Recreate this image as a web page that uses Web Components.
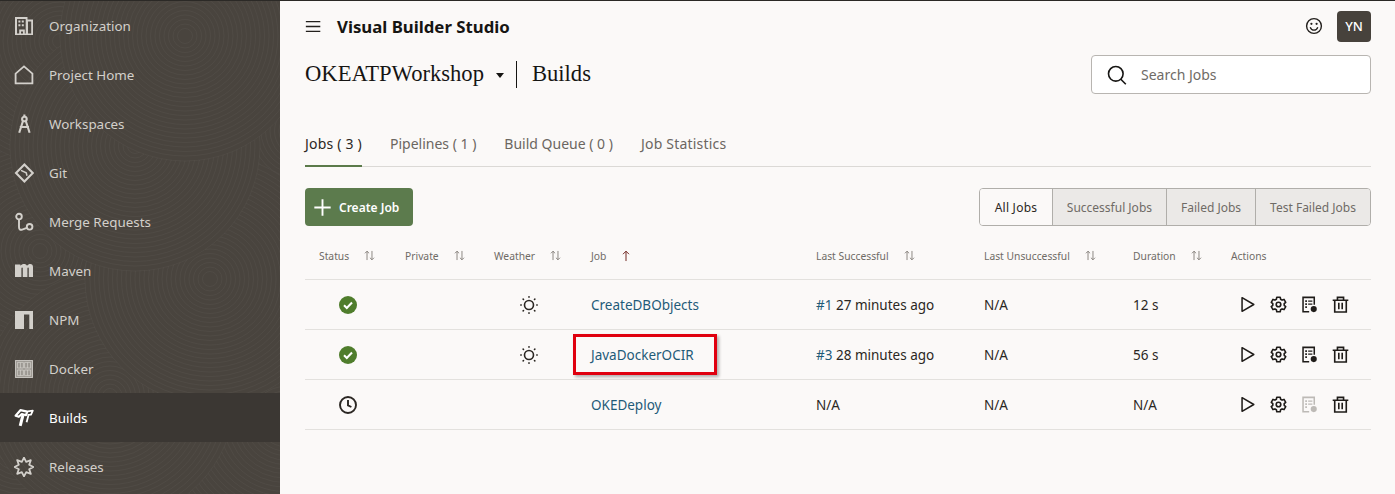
<!DOCTYPE html>
<html lang="en">
<head>
<meta charset="utf-8">
<title>Visual Builder Studio</title>
<style>
  html, body { margin: 0; height: 100%; overflow: hidden; background: #fbf9f8; }
  body { font-family: "Noto Sans", "Open Sans", sans-serif; color: #23201d; }
</style>
</head>
<body>
<vb-app></vb-app>
<script>
// Icon paths, all drawn on a 20x20 box
const ICONS = {
  organization: `<path fill="currentColor" fill-rule="evenodd" d="M1 1h12.5v2.5H19V19H1zM3 3v14.4h2.2v-3.8h5.6v3.8h.9V3zM14 5.6v11.8h3.2V5.6zM7 15.4v2h2v-2zM4.4 4.6h2v2h-2zM7.8 4.6h2v2h-2zM4.4 8.2h2v2h-2zM7.8 8.2h2v2h-2z"/>`,
  home: `<path fill="none" stroke="currentColor" stroke-width="1.8" d="M1.6 8.6 10 1.4l8.4 7.2V18.4H1.6z"/>`,
  workspaces: `<g fill="none" stroke="currentColor" stroke-width="2.1"><circle cx="10.4" cy="5" r="2.3"/><path d="M9 7 5.2 18.8M11.8 7l3.8 11.8M5.8 13h9.2M10.4 .4v2.4"/></g>`,
  git: `<g fill="none" stroke="currentColor"><path stroke-width="2.1" d="M10.4 1.6 18.8 10l-8.4 8.4L2 10z"/><path stroke-width="1.5" d="m7 7.4 5.2 2.4.8 3"/></g>`,
  merge: `<g fill="none" stroke="currentColor" stroke-width="1.9"><circle cx="5" cy="4.6" r="2.8"/><circle cx="15.6" cy="14.8" r="2.8"/><path d="M5 7.4V15c0 2.4 1.2 3.2 3.2 2.6l4.6-1.8"/></g>`,
  maven: `<path fill="currentColor" d="M1 3.4h5.4v1.4C7.4 3.6 8.6 3 10 3s2.4.6 3 1.8C14 3.6 15 3 16.2 3 18 3 19 4.2 19 6v10h-4.2V7.2c0-.5-.3-.7-.7-.7s-.7.2-.7.7V16h-4.6V7.2c0-.5-.3-.7-.7-.7s-.7.2-.7.7V16H1z"/>`,
  npm: `<path fill="currentColor" d="M1 1h18v18h-3.7V4.6H10V19H1z"/>`,
  docker: `<path fill="currentColor" opacity=".6" d="M1 1h18v18H1z"/><path fill="none" stroke="#d3d0cb" stroke-opacity=".75" stroke-width="1" d="M1.5 1.5h17v17h-17zM3.4 3.4h6v5.6h-6zM10.6 3.4h6v5.6h-6zM3.4 11h6v5.6h-6zM10.6 11h6v5.6h-6zM6.4 3.4V9M13.6 3.4V9M6.4 11v5.6M13.6 11v5.6"/>`,
  builds: `<g fill="none" stroke="currentColor" stroke-linejoin="round"><path stroke-width="2.2" d="M1.6 7.8 6.4 2.2l6.8 1.4-1.2 3.6-4.2-1.2-3 2.8z"/><path stroke-width="3" d="M9 7 6.2 17.8"/><path stroke-width="1.8" d="m13.8 3.4 5-.8-1.8 4-3.4.2M14.4 7.4l-1.8 6.8"/></g>`,
  releases: `<path fill="none" stroke="currentColor" stroke-width="1.8" stroke-linejoin="round" d="M10 .6l2.2 4.2 4.6-1.6-1.6 4.6 4.2 2.2-4.2 2.2 1.6 4.6-4.6-1.6L10 19.4l-2.2-4.2-4.6 1.6 1.6-4.6L.6 10l4.2-2.2-1.6-4.6 4.6 1.6z"/>`,
  menu: `<path fill="none" stroke="currentColor" stroke-width="1.5" d="M1 4.2h17M1 10h17M1 15.8h17"/>`,
  smile: `<g fill="none" stroke="currentColor"><circle cx="10" cy="10" r="7.4" stroke-width="1.4"/><path stroke-width="1.3" d="M6.2 11.2c.8 2 2.2 3 3.8 3s3-1 3.8-3"/></g><circle cx="7.4" cy="7.8" r="1.1" fill="currentColor"/><circle cx="12.6" cy="7.8" r="1.1" fill="currentColor"/>`,
  search: `<g fill="none" stroke="currentColor" stroke-width="1.6"><circle cx="8.8" cy="8.8" r="7.3"/><path d="m13.8 14.2 5 5"/></g>`,
  plus: `<path fill="none" stroke="currentColor" stroke-width="2" d="M10 1.4v17.2M1.4 10h17.2"/>`,
  success: `<circle cx="10" cy="10" r="9" fill="#4f7d2c"/><path fill="none" stroke="#fff" stroke-width="2.1" d="m6 10.2 2.8 2.7L14 7.6"/>`,
  clock: `<g fill="none" stroke="currentColor" stroke-width="1.9"><circle cx="10" cy="10" r="8"/><path d="M10 5v5.4l3.4 1.6"/></g>`,
  sun: `<circle cx="10" cy="10" r="5" fill="none" stroke="currentColor" stroke-width="1.8"/><path fill="none" stroke="currentColor" stroke-width="1.7" stroke-linecap="round" d="M10 .8v.6M10 18.6v.6M.8 10h.6M18.6 10h.6M3.5 3.5l.4.4M16.1 16.1l.4.4M3.5 16.5l.4-.4M16.1 3.9l.4-.4"/>`,
  play: `<path fill="none" stroke="currentColor" stroke-width="1.8" stroke-linejoin="round" d="M3.6 2v16L17.4 10z"/>`,
  gear: `<g fill="none" stroke="currentColor" stroke-width="1.9" stroke-linejoin="round"><path d="M8 1.4h4l.5 2.4 1.7 1 2.3-.8 2 3.4-1.8 1.6v2l1.8 1.6-2 3.4-2.3-.8-1.7 1-.5 2.4H8l-.5-2.4-1.7-1-2.3.8-2-3.4L3.3 11V9L1.5 7.4l2-3.4 2.3.8 1.7-1z"/><circle cx="10" cy="10" r="2.7"/></g>`,
  log: `<g fill="none" stroke="currentColor" stroke-width="1.8"><path d="M9.6 18.4H2.4V1.6h13.2v8.8"/></g><path fill="currentColor" d="M5 5h2v2H5zM8.4 5.2h5v1.6h-5zM5 8.6h2v2H5zM8.4 8.8h5v1.6h-5zM5 12.2h2v2H5z"/><circle cx="15" cy="15.4" r="3.6" fill="currentColor"/>`,
  trash: `<g fill="none" stroke="currentColor" stroke-width="1.9"><path d="M.8 5h18.4M6.4 5V1.6h7.2V5M3.2 5v13.8h13.6V5M8 8v7.6M12 8v7.6"/></g>`,
  sortBoth: `<path fill="none" stroke="currentColor" stroke-width="1.3" d="M6.2 17V3.4M3 6.6l3.2-3.2 3.2 3.2M13.8 3v13.6M10.6 13.4l3.2 3.2 3.2-3.2"/>`,
  sortUp: `<path fill="none" stroke="currentColor" stroke-width="1.6" d="M10 18.4V2M5 7l5-5 5 5"/>`
};

class VbIcon extends HTMLElement {
  connectedCallback() {
    const size = this.getAttribute('size') || 20;
    const name = this.getAttribute('name');
    this.attachShadow({ mode: 'open' });
    this.shadowRoot.innerHTML = `
      <style>
        :host { display: inline-flex; flex: none; width: ${size}px; height: ${size}px; }
        svg { display: block; width: 100%; height: 100%; }
      </style>
      <svg viewBox="0 0 20 20" aria-hidden="true">${ICONS[name] || ''}</svg>`;
  }
}
customElements.define('vb-icon', VbIcon);

class VbNavItem extends HTMLElement {
  connectedCallback() {
    this.attachShadow({ mode: 'open' });
    this.shadowRoot.innerHTML = `
      <style>
        :host {
          display: flex;
          align-items: center;
          gap: 15px;
          height: 49px;
          padding-left: 14px;
          font-size: 13.4px;
          color: #d3d0cb;
        }
        :host([active]) { background: #3b3733; color: #fff; }
      </style>
      <vb-icon name="${this.getAttribute('icon')}"></vb-icon>
      <span><slot></slot></span>`;
  }
}
customElements.define('vb-nav-item', VbNavItem);

class VbSidebar extends HTMLElement {
  connectedCallback() {
    // contour lines of the wood-grain background, each swirl covers the ones before it
    const swirls = [[20, 440], [285, 420], [40, 250], [300, 130], [60, 40], [110, 395], [210, 278], [135, 145], [185, 35]];
    let rings = '';
    for (const [cx, cy] of swirls) {
      rings += `<circle cx="${cx}" cy="${cy}" r="125" fill="#49443e"/>`;
      for (let r = 120; r > 3; r -= 4.5) {
        rings += `<circle cx="${cx}" cy="${cy}" r="${r}"/>`;
      }
    }
    this.attachShadow({ mode: 'open' });
    this.shadowRoot.innerHTML = `
      <style>
        :host { display: block; position: relative; background: #49443e; overflow: hidden; }
        svg { position: absolute; inset: 0; width: 100%; height: 100%; }
        nav { position: relative; display: flex; flex-direction: column; }
      </style>
      <svg aria-hidden="true"><g fill="none" stroke="#fff" stroke-opacity=".035" stroke-width="1">${rings}</g></svg>
      <nav><slot></slot></nav>`;
  }
}
customElements.define('vb-sidebar', VbSidebar);

class VbHeader extends HTMLElement {
  connectedCallback() {
    this.attachShadow({ mode: 'open' });
    this.shadowRoot.innerHTML = `
      <style>
        :host { display: flex; align-items: center; height: 50px; }
        .title { margin-left: 15px; font-size: 16.8px; font-weight: 700; color: #161513; }
        .spacer { flex: 1; }
        .avatar {
          display: flex; align-items: center; justify-content: center;
          width: 34px; height: 31px; margin-left: 13px;
          border-radius: 4px; background: #47423c; color: #fff;
          font-size: 13px; font-weight: 500;
        }
      </style>
      <vb-icon name="menu" size="17"></vb-icon>
      <span class="title">Visual Builder Studio</span>
      <span class="spacer"></span>
      <vb-icon name="smile" size="20"></vb-icon>
      <span class="avatar">YN</span>`;
  }
}
customElements.define('vb-header', VbHeader);

class VbPageTitle extends HTMLElement {
  connectedCallback() {
    this.attachShadow({ mode: 'open' });
    this.shadowRoot.innerHTML = `
      <style>
        :host { display: flex; align-items: center; height: 39px; margin-top: 4px; }
        .name { font: 22.6px "Liberation Serif", serif; color: #161513; padding-bottom: 2px; }
        .caret {
          width: 0; height: 0; margin: 2px 11px 0 12px;
          border: 4.5px solid transparent; border-top: 5px solid #161513; border-bottom: 0;
        }
        .divider { width: 1px; height: 27px; background: #161513; margin: 0 15px 0 1px; }
        .spacer { flex: 1; }
        .search {
          display: flex; align-items: center; gap: 14px;
          box-sizing: border-box; width: 280px; height: 39px; padding-left: 15px;
          border: 1px solid #b8b5b1; border-radius: 4px; background: #fff;
          font-size: 14px; color: #6f6b66;
        }
        .search vb-icon { color: #161513; }
      </style>
      <span class="name">OKEATPWorkshop</span>
      <span class="caret"></span>
      <span class="divider"></span>
      <span class="name">Builds</span>
      <span class="spacer"></span>
      <div class="search"><vb-icon name="search" size="20"></vb-icon><span>Search Jobs</span></div>`;
  }
}
customElements.define('vb-page-title', VbPageTitle);

class VbTabs extends HTMLElement {
  connectedCallback() {
    this.attachShadow({ mode: 'open' });
    this.shadowRoot.innerHTML = `
      <style>
        :host {
          display: flex; gap: 28px; height: 45px; margin-top: 28px;
          box-sizing: border-box; border-bottom: 1px solid #dbd9d6;
          font-size: 14px; color: #6b6661;
        }
        span { display: block; height: 45px; box-sizing: border-box; padding-top: 12px; }
        .on { color: #2b2723; border-bottom: 2px solid #5b7a4a; letter-spacing: .2px; }
        .wide { letter-spacing: .2px; }
      </style>
      <span class="on">Jobs ( 3 )</span>
      <span>Pipelines ( 1 )</span>
      <span>Build Queue ( 0 )</span>
      <span class="wide">Job Statistics</span>`;
  }
}
customElements.define('vb-tabs', VbTabs);

class VbToolbar extends HTMLElement {
  connectedCallback() {
    const filters = ['All Jobs', 'Successful Jobs', 'Failed Jobs', 'Test Failed Jobs'];
    this.attachShadow({ mode: 'open' });
    this.shadowRoot.innerHTML = `
      <style>
        :host { display: flex; justify-content: space-between; margin-top: 21px; height: 38px; }
        .create {
          display: flex; align-items: center; gap: 7px;
          width: 108px; box-sizing: border-box; padding-left: 8px;
          border-radius: 4px; background: #5c7b4d; color: #fff;
          font-size: 12px; font-weight: 600;
        }
        .filters {
          display: flex; box-sizing: border-box; height: 38px;
          border: 1px solid #b0aeaa; border-radius: 4px; overflow: hidden;
          font-size: 12px; color: #6f6b66;
        }
        .filters span {
          display: flex; align-items: center; padding: 0 14px;
          background: #ebe9e7; border-left: 1px solid #b0aeaa;
        }
        .filters span:first-child {
          padding: 0 14.5px; background: #fbf9f8; border-left: 0; color: #2b2723; letter-spacing: .25px;
        }
      </style>
      <div class="create"><vb-icon name="plus" size="19"></vb-icon><span>Create Job</span></div>
      <div class="filters">${filters.map(f => `<span>${f}</span>`).join('')}</div>`;
  }
}
customElements.define('vb-toolbar', VbToolbar);

const TABLE_COLUMNS = '100px 89px 97px 225px 168px 149px 98px 1fr';

class VbJobsHead extends HTMLElement {
  connectedCallback() {
    const cols = [['Status', 'sortBoth', 13], ['Private', 'sortBoth', 13], ['Weather', 'sortBoth', 13], ['Job', 'sortUp', 12],
      ['Last Successful', 'sortBoth', 13], ['Last Unsuccessful', 'sortBoth', 13], ['Duration', 'sortBoth', 13], ['Actions']];
    this.attachShadow({ mode: 'open' });
    this.shadowRoot.innerHTML = `
      <style>
        :host {
          display: grid; grid-template-columns: ${TABLE_COLUMNS}; align-items: center;
          box-sizing: border-box; height: 54px; padding-top: 6px;
          border-bottom: 1px solid #e3e1de;
          font-size: 10.3px; color: #6f6b66;
        }
        div { display: flex; align-items: center; gap: 14px; }
        div:first-of-type { padding-left: 14px; }
        .sortUp { color: #6b1f1a; }
        .sortBoth { color: #7a7570; }
      </style>
      ${cols.map(([label, icon, size]) => `<div><span>${label}</span>${icon ? `<vb-icon class="${icon}" name="${icon}" size="${size}"></vb-icon>` : ''}</div>`).join('')}`;
  }
}
customElements.define('vb-jobs-head', VbJobsHead);

class VbJobRow extends HTMLElement {
  connectedCallback() {
    const a = n => this.getAttribute(n);
    const ok = a('status') === 'success';
    const build = a('build');
    this.attachShadow({ mode: 'open' });
    this.shadowRoot.innerHTML = `
      <style>
        :host {
          display: grid; grid-template-columns: ${TABLE_COLUMNS}; align-items: center;
          box-sizing: border-box; height: 50px; border-bottom: 1px solid #e3e1de;
          font-size: 13.5px; color: #2b2723;
        }
        a { color: #1f5b78; text-decoration: none; }
        .status { padding-left: 33px; display: flex; }
        .weather { padding-left: 26px; display: flex; }
        .job { position: relative; }
        .mark {
          position: absolute; left: -18px; top: -12px;
          box-sizing: border-box; width: 144px; height: 41px;
          border: 3px solid #e0000f; box-shadow: 2px 2px 3px rgba(0,0,0,.3);
        }
        .actions { display: flex; gap: 14px; padding-left: 8px; color: #1f1c19; }
        .off { color: #bdbab6; }
      </style>
      <div class="status"><vb-icon name="${ok ? 'success' : 'clock'}" size="20"></vb-icon></div>
      <div></div>
      <div class="weather">${ok ? '<vb-icon name="sun" size="18"></vb-icon>' : ''}</div>
      <div class="job"><a>${a('job')}</a>${this.hasAttribute('marked') ? '<span class="mark"></span>' : ''}</div>
      <div>${build ? `<a>#${build}</a> ${a('ago')}` : 'N/A'}</div>
      <div>N/A</div>
      <div>${a('duration') || 'N/A'}</div>
      <div class="actions">
        <vb-icon name="play" size="17"></vb-icon>
        <vb-icon name="gear" size="17"></vb-icon>
        <vb-icon name="log" size="17"${ok ? '' : ' class="off"'}></vb-icon>
        <vb-icon name="trash" size="17"></vb-icon>
      </div>`;
  }
}
customElements.define('vb-job-row', VbJobRow);

class VbApp extends HTMLElement {
  connectedCallback() {
    this.attachShadow({ mode: 'open' });
    this.shadowRoot.innerHTML = `
      <style>
        :host {
          display: grid; grid-template-columns: 280px 1fr;
          box-sizing: border-box; height: 494px;
          border-top: 1px solid #2b2926;
        }
        main { padding: 0 24px 0 25px; background: #fbf9f8; min-width: 0; }
      </style>
      <vb-sidebar>
        <vb-nav-item icon="organization">Organization</vb-nav-item>
        <vb-nav-item icon="home">Project Home</vb-nav-item>
        <vb-nav-item icon="workspaces">Workspaces</vb-nav-item>
        <vb-nav-item icon="git">Git</vb-nav-item>
        <vb-nav-item icon="merge">Merge Requests</vb-nav-item>
        <vb-nav-item icon="maven">Maven</vb-nav-item>
        <vb-nav-item icon="npm">NPM</vb-nav-item>
        <vb-nav-item icon="docker">Docker</vb-nav-item>
        <vb-nav-item icon="builds" active>Builds</vb-nav-item>
        <vb-nav-item icon="releases">Releases</vb-nav-item>
      </vb-sidebar>
      <main>
        <vb-header></vb-header>
        <vb-page-title></vb-page-title>
        <vb-tabs></vb-tabs>
        <vb-toolbar></vb-toolbar>
        <vb-jobs-head></vb-jobs-head>
        <vb-job-row status="success" job="CreateDBObjects" build="1" ago="27 minutes ago" duration="12 s"></vb-job-row>
        <vb-job-row status="success" job="JavaDockerOCIR" build="3" ago="28 minutes ago" duration="56 s" marked></vb-job-row>
        <vb-job-row status="pending" job="OKEDeploy"></vb-job-row>
      </main>`;
  }
}
customElements.define('vb-app', VbApp);
</script>
</body>
</html>
